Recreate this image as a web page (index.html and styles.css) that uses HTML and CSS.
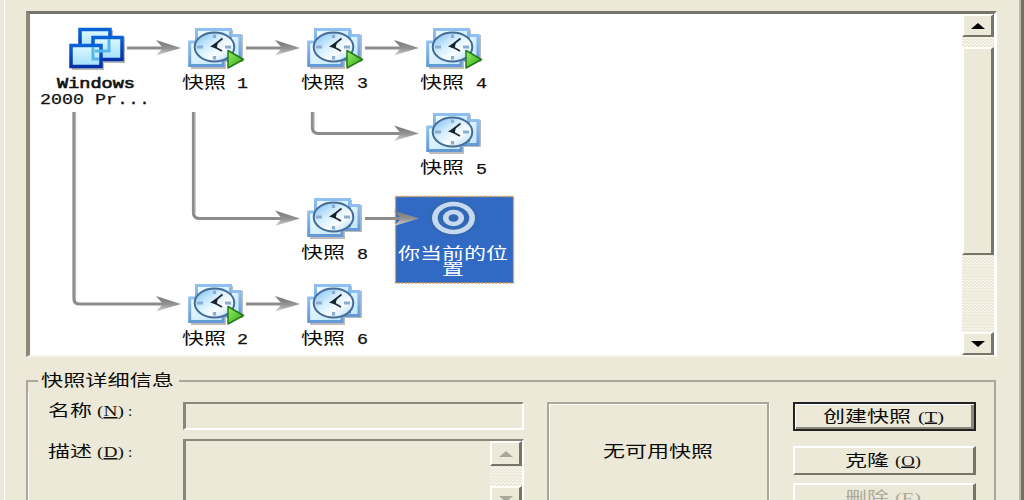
FILE: index.html
```html
<!DOCTYPE html>
<html lang="zh-CN">
<head>
<meta charset="utf-8">
<title>快照管理器</title>
<link rel="stylesheet" href="styles.css">
</head>
<body>
<div class="dialog">
  <div class="tree-panel">
    <svg class="tree" viewBox="30 14 932 341">
      <defs>
        <linearGradient id="headFill" x1="0" y1="0" x2="0" y2="1"><stop offset="0" stop-color="#757575"/><stop offset=".55" stop-color="#949494"/><stop offset="1" stop-color="#d6d6d6"/></linearGradient>
        <linearGradient id="pageEdge" x1="0" y1="0" x2="0" y2="1"><stop offset="0" stop-color="#8fc0f1"/><stop offset="1" stop-color="#6399d4"/></linearGradient>
        <linearGradient id="pageFill" x1="0" y1="0" x2="1" y2="1"><stop offset="0" stop-color="#f0fcff"/><stop offset="1" stop-color="#bde4fa"/></linearGradient>
        <linearGradient id="vmEdge" x1="0" y1="0" x2="0" y2="1"><stop offset="0" stop-color="#0963d8"/><stop offset="1" stop-color="#0630a5"/></linearGradient>
        <linearGradient id="vmFill" x1="0" y1="0" x2="0" y2="1"><stop offset="0" stop-color="#dffaff"/><stop offset="1" stop-color="#a2defb"/></linearGradient>
        <linearGradient id="face" x1="0" y1="0" x2="1" y2="1"><stop offset="0" stop-color="#78baf0"/><stop offset=".4" stop-color="#d3eeff"/><stop offset=".65" stop-color="#fafeff"/><stop offset="1" stop-color="#9fd2f5"/></linearGradient>
        <linearGradient id="play" x1="0" y1="0" x2="1" y2="1"><stop offset="0" stop-color="#9bea6a"/><stop offset="1" stop-color="#27ac12"/></linearGradient>
        <symbol id="head" viewBox="0 0 25 16" overflow="visible"><path d="M0 0 25 8 0 15.5 7 8Z" fill="url(#headFill)"/></symbol>
        <symbol id="snap" viewBox="0 0 58 44" overflow="visible">
          <path d="M9 2H45V7H55V34H38V41H3V16H9Z" fill="#9c9797" opacity=".65"/>
          <path d="M37 7.5H52V31.5H32V7.5Z" fill="url(#pageFill)" stroke="url(#pageEdge)" stroke-width="3"/>
          <path d="M8.500 1.500H42.500V28H8.500Z" fill="url(#pageFill)" stroke="url(#pageEdge)" stroke-width="3"/>
          <path d="M1.700 14H35V37.500H1.700Z" fill="url(#pageFill)" stroke="url(#pageEdge)" stroke-width="3"/>
          <ellipse cx="26.500" cy="19" rx="19.800" ry="14.500" fill="url(#face)" stroke="#456c94" stroke-width="2"/>
          <path d="M26.500 6.500V10M26.500 28V31.500M9 19H15M37 19H43" stroke="#8badd3" stroke-width="3.200"/>
          <path d="M25 18 34.500 10.500M25 18 34 23" fill="none" stroke="#222d36" stroke-width="1.800"/>
          <path d="M22 18.500 30 14 28.500 20.500Z" fill="#18222a"/>
        </symbol>
        <symbol id="run" viewBox="0 0 18 20" overflow="visible"><path d="M1 1 16.500 10 1 18.500Z" fill="url(#play)" stroke="#237c16" stroke-width="1.500" stroke-linejoin="round"/></symbol>
      </defs>

      <rect x="395.500" y="196.500" width="118" height="86.500" fill="#316ac5"/>
      <rect x="395.500" y="196.500" width="118" height="86.500" fill="none" stroke="#e09a45" stroke-width="1.500" stroke-dasharray="2 1.500"/>

      <g class="link">
        <path d="M127 48H164M246 48H283M365 48H402M246 304H283M365 218.500H402"/>
        <path d="M74 112V299Q74 304 80 304H164M193.500 112V213Q193.500 218.500 200 218.500H283M312.500 112V128Q312.500 133.500 319 133.500H402"/>
      </g>
      <path class="link-shine" d="M75.500 112V299M195 112V213M314 112V128"/>
      <use href="#head" x="156" y="40" width="25" height="16"/>
      <use href="#head" x="275" y="40" width="25" height="16"/>
      <use href="#head" x="394" y="40" width="25" height="16"/>
      <use href="#head" x="394" y="125.500" width="25" height="16"/>
      <use href="#head" x="275" y="210.500" width="25" height="16"/>
      <use href="#head" x="394" y="210.500" width="25" height="16"/>
      <use href="#head" x="156" y="296" width="25" height="16"/>
      <use href="#head" x="275" y="296" width="25" height="16"/>

      <path d="M80 30H113V37H125V63H104V70H72V67H102V52H80Z" fill="#8b8b8b" opacity=".6"/>
      <g stroke="url(#vmEdge)" stroke-width="3.500">
        <rect x="80" y="29.500" width="30" height="21" fill="url(#vmFill)"/>
        <rect x="93" y="37.500" width="29" height="22" fill="url(#vmFill)"/>
        <rect x="71" y="45.500" width="30" height="21" fill="url(#vmFill)"/>
      </g>
      <path d="M95 51H109V39M93 47V59H99" fill="none" stroke="#55b7ed" stroke-width="3"/>

      <use href="#snap" x="188" y="28" width="58" height="44"/>
      <use href="#snap" x="307" y="28" width="58" height="44"/>
      <use href="#snap" x="426" y="28" width="58" height="44"/>
      <use href="#snap" x="426" y="113" width="58" height="44"/>
      <use href="#snap" x="307" y="198" width="58" height="44"/>
      <use href="#snap" x="188" y="284" width="58" height="44"/>
      <use href="#snap" x="307" y="284" width="58" height="44"/>
      <use href="#run" x="227" y="49.500" width="18" height="20"/>
      <use href="#run" x="346" y="49.500" width="18" height="20"/>
      <use href="#run" x="465" y="49.500" width="18" height="20"/>
      <use href="#run" x="227" y="305.500" width="18" height="20"/>

      <ellipse cx="453.500" cy="218" rx="25" ry="18.500" fill="#3169b3"/>
      <ellipse cx="453.500" cy="218" rx="21.500" ry="16.300" fill="#c6d9f1"/>
      <ellipse cx="453.500" cy="218" rx="15.800" ry="11.800" fill="#3169b3"/>
      <ellipse cx="453.500" cy="218" rx="10.700" ry="8.300" fill="#c6d9f1"/>
      <ellipse cx="453.500" cy="218" rx="5" ry="3.800" fill="#3169b3"/>

      <g class="mono">
        <text class="title" x="57" y="88" textLength="78" lengthAdjust="spacingAndGlyphs">Windows</text>
        <text x="40" y="104" textLength="110" lengthAdjust="spacingAndGlyphs">2000 Pr...</text>
        <text x="237" y="88" textLength="11" lengthAdjust="spacingAndGlyphs">1</text>
        <text x="357" y="88" textLength="11" lengthAdjust="spacingAndGlyphs">3</text>
        <text x="476" y="88" textLength="11" lengthAdjust="spacingAndGlyphs">4</text>
        <text x="476" y="173.500" textLength="11" lengthAdjust="spacingAndGlyphs">5</text>
        <text x="357" y="258.500" textLength="11" lengthAdjust="spacingAndGlyphs">8</text>
        <text x="237" y="344" textLength="11" lengthAdjust="spacingAndGlyphs">2</text>
        <text x="357" y="344" textLength="11" lengthAdjust="spacingAndGlyphs">6</text>
      </g>
      <g class="han">
        <text x="182" y="87.500" textLength="44" lengthAdjust="spacingAndGlyphs">快照</text>
        <text x="301" y="87.500" textLength="44" lengthAdjust="spacingAndGlyphs">快照</text>
        <text x="420" y="87.500" textLength="44" lengthAdjust="spacingAndGlyphs">快照</text>
        <text x="420" y="173" textLength="44" lengthAdjust="spacingAndGlyphs">快照</text>
        <text x="301" y="258" textLength="44" lengthAdjust="spacingAndGlyphs">快照</text>
        <text x="182" y="343.500" textLength="44" lengthAdjust="spacingAndGlyphs">快照</text>
        <text x="301" y="343.500" textLength="44" lengthAdjust="spacingAndGlyphs">快照</text>
        <text class="selected" x="398" y="258.500" textLength="110" lengthAdjust="spacingAndGlyphs">你当前的位</text>
        <text class="selected" x="442" y="275" textLength="22" lengthAdjust="spacingAndGlyphs">置</text>
      </g>
    </svg>
    <div class="scrollbar">
      <div class="scroll-button"><svg width="14" height="6"><path d="M0 6 7 0 14 6Z" fill="#000"/></svg></div>
      <div class="thumb"></div>
      <div class="scroll-button last"><svg width="14" height="6"><path d="M0 0H14L7 6Z" fill="#000"/></svg></div>
    </div>
  </div>

  <fieldset class="details">
    <legend><svg width="141" height="22"><text class="han" x="3" y="16" textLength="133" lengthAdjust="spacingAndGlyphs">快照详细信息</text></svg></legend>
    <div class="details-grid">
      <div class="fields">
        <svg class="label" width="100" height="28"><text class="han" x="0" y="14" textLength="44" lengthAdjust="spacingAndGlyphs">名称</text><text class="key" x="49" y="14" textLength="27" lengthAdjust="spacingAndGlyphs">(<tspan class="mnemonic">N</tspan>)</text><text class="key" x="80" y="14">:</text></svg>
        <div class="input"></div>
        <svg class="label" width="100" height="28"><text class="han" x="0" y="18" textLength="44" lengthAdjust="spacingAndGlyphs">描述</text><text class="key" x="49" y="18" textLength="27" lengthAdjust="spacingAndGlyphs">(<tspan class="mnemonic">D</tspan>)</text><text class="key" x="80" y="18">:</text></svg>
        <div class="textarea">
          <div class="scrollbar small">
            <div class="scroll-button"><svg width="14" height="6"><path d="M0 6 7 0 14 6Z" fill="#aca899"/></svg></div>
            <div class="scroll-button last"><svg width="14" height="6"><path d="M0 0H14L7 6Z" fill="#aca899"/></svg></div>
          </div>
        </div>
      </div>
      <div class="preview"><svg width="114" height="24"><text class="han" x="2" y="17" textLength="110" lengthAdjust="spacingAndGlyphs">无可用快照</text></svg></div>
      <div class="actions">
        <button class="button default"><svg width="124" height="24"><text class="han" x="0" y="16.500" textLength="88" lengthAdjust="spacingAndGlyphs">创建快照</text><text class="key" x="95" y="16.500" textLength="26" lengthAdjust="spacingAndGlyphs">(<tspan class="mnemonic">T</tspan>)</text></svg></button>
        <button class="button"><svg width="78" height="24"><text class="han" x="0" y="16.500" textLength="44" lengthAdjust="spacingAndGlyphs">克隆</text><text class="key" x="50" y="16.500" textLength="26" lengthAdjust="spacingAndGlyphs">(<tspan class="mnemonic">O</tspan>)</text></svg></button>
        <button class="button disabled" disabled><svg width="78" height="24"><text class="han" x="0" y="16.500" textLength="44" lengthAdjust="spacingAndGlyphs">删除</text><text class="key" x="50" y="16.500" textLength="26" lengthAdjust="spacingAndGlyphs">(<tspan class="mnemonic">E</tspan>)</text></svg></button>
      </div>
    </div>
  </fieldset>
</div>
</body>
</html>
```
FILE: styles.css
```css
* { box-sizing: border-box; }
body { margin: 0; height: 500px; overflow: hidden; background: #ece9d8; }
svg { display: block; flex: none; overflow: visible; }

.dialog {
  height: 500px;
  overflow: hidden;
  margin-left: 4px;
  padding: 11px 21px 0 22px;
  border-left: 1px solid #fff;
  border-right: 3px solid #716f64;
  box-shadow: inset -2px 0 #bdb9a9;
}

.dialog > * { margin-left: -1px; }

.tree-panel {
  display: flex;
  width: 971px;
  height: 346px;
  background: #fff;
  border-style: solid;
  border-width: 3px 3px 2px 4px;
  border-color: #77766a #fff #f6f4e9 #8c897c;
}
.tree { width: 932px; height: 341px; }
.link { fill: none; stroke: #8c8c8c; stroke-width: 3.2; }
.link-shine { fill: none; stroke: #b9b9b9; stroke-width: 1.3; }

.scrollbar {
  display: flex;
  flex-direction: column;
  width: 32px;
  background: repeating-conic-gradient(#f8f6ee 0 25%, #ece9d8 0 50%) 0 0 / 4px 3px;
}
.scroll-button, .thumb {
  background: #ece9d8;
  border-style: solid;
  border-width: 2px 3px 2px 2px;
  border-color: #fffffa #77756a #77756a #fffffa;
}
.scroll-button { display: flex; align-items: center; justify-content: center; height: 23px; flex: none; }
.last { margin-top: auto; }
.thumb { height: 208px; margin-top: 10px; }

.han { font-family: "Noto Sans CJK SC", sans-serif; font-size: 15.5px; fill: #0c0c0c; }
.mono { font-family: "Liberation Mono", monospace; font-size: 14.5px; fill: #111; stroke: #111; stroke-width: .25px; }
.title { font-size: 14px; stroke-width: .6px; }
.key { font-family: "Liberation Serif", serif; font-size: 15.5px; fill: #111; }
.mnemonic { text-decoration: underline; }
.selected { fill: #fff; }

.details {
  width: 970px;
  height: 160px;
  margin: 13px 0 0 -1px;
  padding: 0;
  border: 2px solid #aca899;
}
.details legend { margin-left: 10px; padding: 0; }
.details-grid {
  display: flex;
  height: 140px;
  padding: 10px 17px 0 19px;
  border-left: 1px solid #fff;
}
.fields {
  display: grid;
  grid-template-columns: 135px 341px;
  grid-template-rows: 28px 90px;
  row-gap: 9px;
}
.input, .textarea {
  border-style: solid;
  border-width: 2px 2px 2px 3px;
  border-color: #8a877a #fff #fff #8a877a;
}
.textarea { display: flex; justify-content: flex-end; }
.small { height: 66px; }
.small .scroll-button { height: 25px; }
.small .last { margin-top: 20px; }

.preview {
  display: flex;
  justify-content: center;
  width: 222px;
  height: 130px;
  margin-left: 23px;
  padding-top: 36px;
  border: 2px solid #aca899;
  box-shadow: 1px 1px #fff, inset 1px 1px #fff;
}
.actions { display: flex; flex-direction: column; width: 183px; margin-left: 24px; }
.button {
  display: flex;
  align-items: center;
  justify-content: center;
  flex: none;
  height: 29px;
  margin: 0 0 8px;
  padding: 0;
  background: #ece9d8;
  border-style: solid;
  border-width: 2px 3px 2px 2px;
  border-color: #fff #77756a #77756a #fff;
}
.default {
  margin-bottom: 15px;
  border: 2px solid #222;
  box-shadow: inset 1px 1px #fff, inset -3px -2px #8a887c;
}
.disabled .han, .disabled .key { fill: #aca899; }
```
